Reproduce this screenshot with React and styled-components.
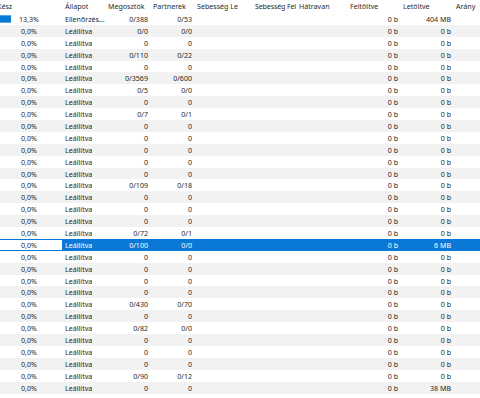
import React from "react"
import styled, { createGlobalStyle } from "styled-components"

const GlobalStyle = createGlobalStyle`
	html, body {
		margin: 0;
		padding: 0;
		background: #ffffff;
		overflow: hidden;
	}
`

const COLS = "62px 43px 45px 44px 58px 44px 51px 53px 53px 1fr"

const Table = styled.div`
	width: 480px;
	height: 398px;
	overflow: hidden;
	font-family: "Noto Sans", "Open Sans", sans-serif;
	font-size: 7.1px;
	color: #1f1f1f;
	background: #ffffff;
`

const HeaderRow = styled.div`
	display: grid;
	grid-template-columns: ${COLS};
	height: 13px;
	align-items: center;
	background: #ffffff;
`

const HeaderCell = styled.div`
	padding-left: 3px;
	white-space: nowrap;
	overflow: ${p => (p.$indent ? "hidden" : "visible")};
	text-indent: ${p => p.$indent || 0}px;
	padding-bottom: 2px;
	color: #2a2a2a;
	letter-spacing: ${p => (p.$tight ? "-0.15px" : "0")};
`

const Row = styled.div`
	display: grid;
	grid-template-columns: ${COLS};
	height: 11.9px;
	align-items: center;
	background: ${p => (p.$selected ? "#0a78d6" : p.$odd ? "#f2f2f2" : "#ffffff")};
	color: ${p => (p.$selected ? "#ffffff" : "#1f1f1f")};
`

const Cell = styled.div`
	white-space: nowrap;
	overflow: hidden;
	text-align: ${p => (p.$right ? "right" : "left")};
	padding: ${p => (p.$right ? "0 2px 0 0" : "0 0 0 3px")};
`

const ProgressCell = styled.div`
	position: relative;
	height: 100%;
	display: flex;
	align-items: center;
	justify-content: center;
	padding-right: 4px;
	background: ${p => (p.$selected ? "#ffffff" : "transparent")};
	box-shadow: ${p => (p.$selected ? "inset 0 1px 0 #0a78d6, inset 0 -1px 0 #0a78d6" : "none")};
	color: #1f1f1f;
`

const ProgressFill = styled.div`
	position: absolute;
	left: 0;
	top: 2px;
	bottom: 2px;
	background: #0a78d6;
	border-top: 1px solid #5aa6e6;
	border-bottom: 1px solid #5aa6e6;
`

const ProgressText = styled.span`
	position: relative;
`

const headers = [
	["Kész", -6],
	["Állapot"],
	["Megosztók"],
	["Partnerek"],
	["Sebesség Le"],
	["Sebesség Fel", 0, true],
	["Hátravan"],
	["Feltöltve"],
	["Letöltve"],
	["Arány"],
]

const peers = [
	["0/388", "0/53"],
	["0/0", "0/0"],
	["0", "0"],
	["0/110", "0/22"],
	["0", "0"],
	["0/3569", "0/600"],
	["0/5", "0/0"],
	["0", "0"],
	["0/7", "0/1"],
	["0", "0"],
	["0", "0"],
	["0", "0"],
	["0", "0"],
	["0", "0"],
	["0/109", "0/18"],
	["0", "0"],
	["0", "0"],
	["0", "0"],
	["0/72", "0/1"],
	["0/100", "0/0"],
	["0", "0"],
	["0", "0"],
	["0", "0"],
	["0", "0"],
	["0/430", "0/70"],
	["0", "0"],
	["0/82", "0/0"],
	["0", "0"],
	["0", "0"],
	["0", "0"],
	["0/90", "0/12"],
	["0", "0"],
]

const torrents = peers.map(([seeds, partners], i) => ({
	progress: i === 0 ? 13.3 : 0,
	status: i === 0 ? "Ellenőrzés..." : "Leállítva",
	seeds,
	partners,
	uploaded: "0 b",
	downloaded: i === 0 ? "404 MB" : i === 19 ? "6 MB" : i === 31 ? "38 MB" : "0 b",
	selected: i === 19,
}))

export default function App() {
	return (
		<>
			<GlobalStyle />
			<Table>
				<HeaderRow>
					{headers.map(([label, indent, tight]) => (
						<HeaderCell key={label} $indent={indent} $tight={tight}>
							{label}
						</HeaderCell>
					))}
				</HeaderRow>
				{torrents.map((t, i) => (
					<Row key={i} $odd={i % 2 === 1} $selected={t.selected}>
						<ProgressCell $selected={t.selected}>
							{t.progress > 0 && <ProgressFill style={{ width: `${t.progress * 0.8}px` }} />}
							<ProgressText>{t.progress.toFixed(1).replace(".", ",")}%</ProgressText>
						</ProgressCell>
						<Cell>{t.status}</Cell>
						<Cell $right>{t.seeds}</Cell>
						<Cell $right>{t.partners}</Cell>
						<Cell $right></Cell>
						<Cell $right></Cell>
						<Cell $right></Cell>
						<Cell $right>{t.uploaded}</Cell>
						<Cell $right>{t.downloaded}</Cell>
						<Cell $right></Cell>
					</Row>
				))}
			</Table>
		</>
	)
}
